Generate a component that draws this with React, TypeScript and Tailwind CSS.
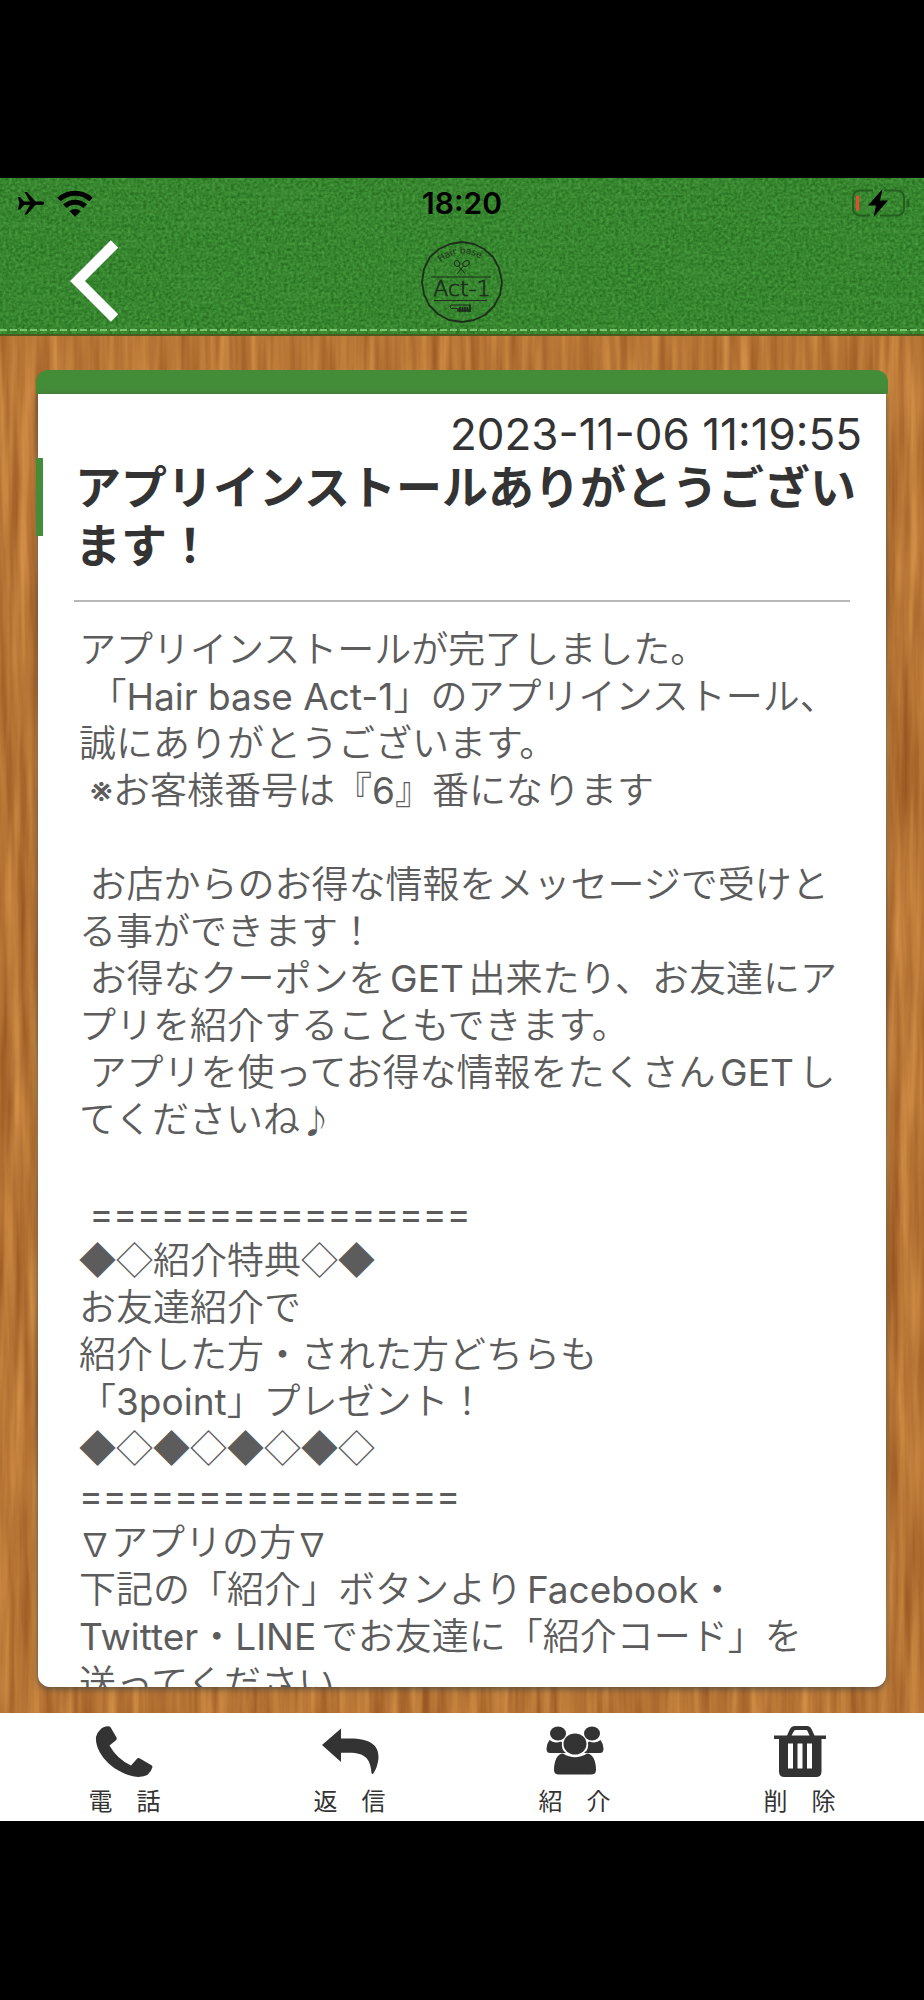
import type { ReactNode } from 'react';

const message = `アプリインストールが完了しました。
 「Hair base Act-1」のアプリインストール、誠にありがとうございます。
 ※お客様番号は『6』番になります

 お店からのお得な情報をメッセージで受けとる事ができます！
 お得なクーポンをGET出来たり、お友達にアプリを紹介することもできます。
 アプリを使ってお得な情報をたくさんGETしてくださいね♪

 ================
◆◇紹介特典◇◆
お友達紹介で
紹介した方・された方どちらも
「3point」プレゼント！
◆◇◆◇◆◇◆◇
================
∇アプリの方∇
下記の「紹介」ボタンよりFacebook・
Twitter・LINEでお友達に「紹介コード」を
送ってください。`;

function FabricTexture() {
  return (
    <svg className="absolute inset-0 h-full w-full" aria-hidden="true">
      <filter id="fabric" x="0" y="0" width="100%" height="100%" colorInterpolationFilters="sRGB">
        <feTurbulence type="fractalNoise" baseFrequency="0.32 0.34" numOctaves="2" seed="4" result="grain" />
        <feColorMatrix
          in="grain"
          type="matrix"
          values="0.2 0 0 0 0.11  0.3 0 0 0 0.37  0.18 0 0 0 0.09  0 0 0 0 1"
          result="base"
        />
        <feTurbulence type="fractalNoise" baseFrequency="0.012 0.25" numOctaves="2" seed="9" />
        <feColorMatrix type="matrix" values="0 0 0 0 0.3  0 0 0 0 0.6  0 0 0 0 0.26  0.9 0 0 0 -0.42" result="weft" />
        <feMerge>
          <feMergeNode in="base" />
          <feMergeNode in="weft" />
        </feMerge>
      </filter>
      <rect width="100%" height="100%" filter="url(#fabric)" />
      <line x1="0" x2="100%" y1="152" y2="152" stroke="#7cc46c" strokeWidth="2" strokeDasharray="7 3" />
      <line x1="0" x2="100%" y1="157" y2="157" stroke="#4d5a1f" strokeWidth="2" />
    </svg>
  );
}

function WoodTexture() {
  return (
    <svg className="absolute inset-0 h-full w-full" aria-hidden="true">
      <filter id="wood" x="0" y="0" width="100%" height="100%" colorInterpolationFilters="sRGB">
        <feTurbulence type="fractalNoise" baseFrequency="0.1 0.006" numOctaves="3" seed="12" />
        <feColorMatrix
          type="matrix"
          values="0.3 0 0 0 0.57  0.3 0 0 0 0.31  0.2 0 0 0 0.11  0 0 0 0 1"
        />
      </filter>
      <rect width="100%" height="100%" filter="url(#wood)" />
    </svg>
  );
}

function StatusBar() {
  return (
    <div className="relative grid h-[50px] grid-cols-3 items-center text-black">
      <div className="flex items-center gap-3 pl-[18px]">
        <svg className="h-6 w-[27px]" viewBox="0 0 27 24" fill="currentColor" aria-label="機内モード">
          <path d="M0 6h2l4 4.600h6L6.500 1H9l8.500 9.600H24c3 0 3 3.400 0 3.400h-6.500L9 23.500H6.500L12 14H6l-4 4.500H0l1.500-6.200z" />
        </svg>
        <svg className="h-[27px] w-9" viewBox="0 0 36 27" aria-label="Wi-Fi">
          <g fill="none" stroke="currentColor" strokeWidth="5">
            <path d="M2 9.500a23.500 23.500 0 0 1 32 0" />
            <path d="M7.800 16.200a15 15 0 0 1 20.400 0" />
          </g>
          <path d="M12.500 21.300a8 8 0 0 1 11 0L18 26.800z" fill="currentColor" />
        </svg>
      </div>
      <time className="text-center text-[30px] leading-8 font-semibold">18:20</time>
      <div className="flex justify-end pr-[14px]">
        <svg className="h-[30px] w-[60px]" viewBox="0 0 60 30" fill="none" aria-label="充電中">
          <path
            d="M23 2.500H10a7 7 0 0 0-7 7v11a7 7 0 0 0 7 7h10M34 2.500h13a7 7 0 0 1 7 7v11a7 7 0 0 1-7 7H30"
            stroke="#245f20"
            strokeWidth="2"
          />
          <path d="M58 11v8" stroke="#245f20" strokeWidth="2.500" />
          <path d="M7.500 7.500v15" stroke="#ef4632" strokeWidth="3" />
          <path d="M32.500 1L18 17.500h8L23.500 29 38 12.500h-8z" fill="#000" />
        </svg>
      </div>
    </div>
  );
}

function Logo() {
  return (
    <svg
      className="h-[84px] w-[84px] font-['DejaVu_Sans',sans-serif] font-extralight"
      viewBox="0 0 84 84"
      fill="none"
      stroke="#1d2f1b"
      aria-label="Hair base Act-1"
    >
      <path
        d="M42 2l12 2 10 5 9 8 6 11 3 14-2 13-6 11-9 9-11 5-12 2-13-2-11-6-9-9-5-11-2-12 2-13 6-12 9-8 11-5z"
        strokeWidth="1.800"
        strokeLinejoin="round"
      />
      <defs>
        <path id="logo-arc" d="M20.500 22.500Q42 4.500 66 22.500" />
      </defs>
      <text className="text-[9px] font-normal" fill="#1d2f1b" stroke="none">
        <textPath href="#logo-arc">Hair base</textPath>
      </text>
      <path d="M11 37h60M14 60.500h53" strokeWidth="1" />
      <g strokeWidth="1">
        <ellipse cx="37" cy="23.500" rx="2.500" ry="3" transform="rotate(-35 37 23.500)" />
        <ellipse cx="46" cy="23.500" rx="3.500" ry="2.500" transform="rotate(-35 46 23.500)" />
        <path d="M38.500 26l7 8M44 25.500L37 34" />
      </g>
      <text x="42" y="56" textAnchor="middle" className="text-[22px]" fill="#1d2f1b" strokeWidth="0.700">
        Act-1
      </text>
      <path d="M51 65H31q-2 2 0 3.500h8" strokeWidth="1" />
      <path d="M37 70.500h14M40 67v5M42.500 67v5M45 67v5M47.500 67v5M50 65v7" strokeWidth="1.800" />
    </svg>
  );
}

function Header() {
  return (
    <header className="relative h-[158px] shrink-0">
      <FabricTexture />
      <StatusBar />
      <div className="relative grid grid-cols-3 items-center pt-3">
        <button type="button" aria-label="戻る" className="ml-[68px] w-fit">
          <svg className="h-[84px] w-[52px]" viewBox="0 0 52 84" fill="none">
            <path d="M46.500 4L9.500 41l37 37" stroke="#fff" strokeWidth="10.500" />
          </svg>
        </button>
        <div className="flex justify-center">
          <Logo />
        </div>
      </div>
    </header>
  );
}

// Latin runs and symbols are set a little heavier than the kana around them
function styleRun(run: string) {
  if (/^[◆◇]/.test(run)) return "leading-none font-['Noto_Sans_CJK_JP',sans-serif]";
  if (/^[∇♪]/.test(run)) return 'text-[32px] leading-none font-normal';
  if (/^=/.test(run)) return 'text-[36px] leading-none font-normal';
  return 'leading-none font-normal';
}

function MessageText({ text }: { text: string }) {
  return (
    <p className="min-h-0 flex-1 overflow-hidden pt-6 pr-[38px] pl-[41px] text-[37px] leading-[47px] font-[350] whitespace-pre-wrap text-[#5c5c5c] [text-autospace:normal]">
      {text.split(/([◆◇]+|[∇※♪]|=+|[A-Za-z0-9-]+)/).map((run, i) =>
        i % 2 === 1 ? (
          <span key={i} className={styleRun(run)}>
            {run}
          </span>
        ) : (
          run
        ),
      )}
    </p>
  );
}

function MessageCard() {
  return (
    <article className="flex min-h-0 flex-1 flex-col">
      <div className="h-6 shrink-0 rounded-t-xl bg-[#438c38]" />
      <div className="mx-0.5 flex min-h-0 flex-1 flex-col rounded-b-xl bg-white shadow-[0_2px_6px_rgba(70,70,70,0.8)]">
        <time className="pt-4 pr-6 text-right text-[44px] leading-[48px] text-[#333]">2023-11-06 11:19:55</time>
        <div className="-ml-0.5 flex">
          <div className="h-[78px] w-[7px] shrink-0 bg-[#438c38]" />
          <h1 className="pl-8 text-[46px] leading-[58px] font-bold text-[#333]">
            アプリインストールありがとうございます！
          </h1>
        </div>
        <hr className="mx-9 mt-[26px] shrink-0 border-t-2 border-[#b8b8b8]" />
        <MessageText text={message} />
      </div>
    </article>
  );
}

interface ToolbarButtonProps {
  label: string;
  children: ReactNode;
}

function ToolbarButton({ label, children }: ToolbarButtonProps) {
  return (
    <button type="button" className="flex flex-col items-center gap-2 pt-2.5 text-[#333]">
      <svg className="h-14 w-[60px]" viewBox="0 0 60 56" fill="currentColor" aria-hidden="true">
        {children}
      </svg>
      <span className="text-2xl leading-[30px] whitespace-pre">{label}</span>
    </button>
  );
}

function Toolbar() {
  return (
    <nav className="grid h-[108px] shrink-0 grid-cols-4 bg-white px-3">
      <ToolbarButton label="電　話">
        <path d="M5 7Q9 2.500 14.500 3.500q1 .2 1.500 1.500l5.500 9.500q.8 1.500-.5 2.700L14.500 22.500Q22 36 36 42.500l6-6.700q1-1.200 2.500-.5l12 7q1.200.7.900 2Q55 54 43.500 54C20 52-.5 31 1 14Q1.800 9.700 5 7z" />
      </ToolbarButton>
      <ToolbarButton label="返　信">
        <path d="M2 22L21 5.500V15.500H30C50 15.500 59 22 58.500 35Q57.800 44 53 51q-1.500 0-1.500-1C50.500 33 42 30 30 29.700H21V39z" />
      </ToolbarButton>
      <ToolbarButton label="紹　介">
        <ellipse cx="13" cy="10.500" rx="8" ry="7" />
        <ellipse cx="47" cy="10.500" rx="8" ry="7" />
        <path d="M4.500 17Q9 21 16 18.500l1 1Q16 27 21 30H5Q1.500 30 1.500 25.500T4.500 17zM55.500 17Q51 21 44 18.500l-1 1Q44 27 39 30h16q3.500 0 3.500-4.500T55.500 17z" />
        <ellipse cx="30" cy="21" rx="11.500" ry="10.500" />
        <path d="M18 30.500Q30 38 42 30.500c6 0 9 8 9 16.500q0 4.500-5 4.500H14q-5 0-5-4.500c0-8.500 3-16.500 9-16.500z" />
      </ToolbarButton>
      <ToolbarButton label="削　除">
        <path
          fillRule="evenodd"
          d="M4 12.500h13L20 6Q21.500 3 25 3h12q3 0 4.500 3l3 6.500H56V16H51.500V48.500Q51.500 54 46 54H14.500Q9 54 9 48.500V16H4zM21.500 12.500h18L37.500 8Q37 7 36 7H26q-1.500 0-2 1zM18 20.500v25h5v-25zM27.500 20.500v25h5v-25zM37 20.500v25h5v-25z"
        />
      </ToolbarButton>
    </nav>
  );
}

export default function App() {
  return (
    <div
      lang="ja"
      className="flex h-screen flex-col bg-black pt-[178px] pb-[179px] font-['Inter','Noto_Sans_CJK_JP',sans-serif]"
    >
      <Header />
      <main className="relative flex min-h-0 flex-1 flex-col">
        <WoodTexture />
        <div className="relative flex min-h-0 flex-1 flex-col px-9 pt-[34px] pb-[26px]">
          <MessageCard />
        </div>
      </main>
      <Toolbar />
    </div>
  );
}
